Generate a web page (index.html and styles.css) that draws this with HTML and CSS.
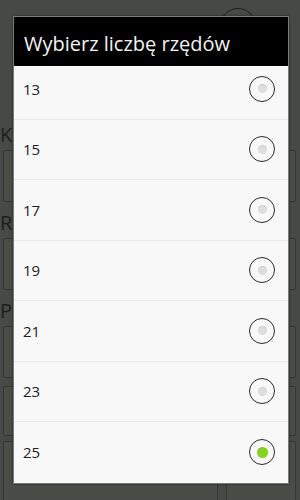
FILE: index.html
```html
<!DOCTYPE html>
<html lang="pl">
<head>
    <meta charset="UTF-8">
    <meta name="viewport" content="width=device-width, initial-scale=1.0">
    <title>Wybierz liczbę rzędów</title>
    <link rel="stylesheet" href="styles.css">
</head>
<body>
    <!-- Ekran pod spodem -->
    <div class="screen">
        <div class="top-icon"></div>
        <div class="label first">Kolumny</div>
        <div class="field">9</div>
        <div class="label">Rzędy</div>
        <div class="field">25</div>
        <div class="label">Pola</div>
        <div class="field">6</div>
        <div class="field short"></div>
        <div class="buttons">
            <div class="btn-back"></div>
            <div class="btn-back small"></div>
        </div>
    </div>
    <div class="dim"></div>

    <!-- Okno dialogowe -->
    <div class="dialog">
        <div class="dialog-title">Wybierz liczbę rzędów</div>
        <div class="list">
            <div class="inner">
                <div class="row"><span>13</span><span class="radio"></span></div>
                <div class="row"><span>15</span><span class="radio"></span></div>
                <div class="row"><span>17</span><span class="radio"></span></div>
                <div class="row"><span>19</span><span class="radio"></span></div>
                <div class="row"><span>21</span><span class="radio"></span></div>
                <div class="row"><span>23</span><span class="radio"></span></div>
                <div class="row"><span>25</span><span class="radio checked"></span></div>
            </div>
        </div>
    </div>
</body>
</html>
```

FILE: styles.css
```css
body {
    margin: 0;
    width: 300px;
    height: 500px;
    overflow: hidden;
    position: relative;
    font-family: 'Open Sans', 'Noto Sans', sans-serif;
    background: #4c4f4a;
}

/* Ekran pod spodem */
.screen {
    padding: 0 4px 0 3px;
}

.top-icon {
    width: 34px;
    height: 34px;
    margin: 8px 0 0 217px;
    border: 1px solid #111;
    border-radius: 50%;
    opacity: 0.8;
}

.label {
    font-size: 20px;
    color: #1c1c1c;
    margin: 10px 0 4px -3px;
    line-height: 22px;
}

.label.first {
    margin-top: 80px;
}

.field {
    height: 50px;
    border: 1px solid #393b37;
    border-radius: 2px;
    background: #50534e;
    color: #222;
    font-size: 16px;
    line-height: 50px;
    padding-left: 14px;
}

.field.short {
    margin-top: 8px;
    height: 48px;
}

.buttons {
    display: flex;
    gap: 8px;
    margin-top: 5px;
}

.btn-back {
    flex: 1;
    height: 58px;
    border: 1px solid #393b37;
    background: #50534e;
}

.btn-back.small {
    flex: 0 0 68px;
}

.dim {
    position: absolute;
    top: 0;
    left: 0;
    right: 0;
    bottom: 0;
    background: rgba(40, 40, 40, 0.15);
}

/* Okno dialogowe */
.dialog {
    position: absolute;
    top: 16px;
    left: 13px;
    width: 274px;
    border: 1px solid #7a7a7a;
    box-shadow: 0 0 2px rgba(0, 0, 0, 0.6);
}

.dialog-title {
    background: #000;
    color: #f2f2f2;
    font-size: 20px;
    height: 49px;
    line-height: 54px;
    padding-left: 10px;
    white-space: nowrap;
}

.list {
    background: #f8f8f8;
    height: 417px;
    overflow: hidden;
}

.inner {
    margin-top: -7px;
}

.row {
    box-sizing: border-box;
    height: 60.5px;
    display: flex;
    align-items: center;
    justify-content: space-between;
    padding: 0 13px 0 9px;
    border-bottom: 1px solid #ebebeb;
    font-size: 15px;
    color: #222;
}

.row:last-child {
    border-bottom: none;
}

.radio {
    box-sizing: border-box;
    width: 26px;
    height: 26px;
    border: 1px solid #2a2a2a;
    border-radius: 50%;
    display: flex;
    align-items: center;
    justify-content: center;
}

.radio::after {
    content: "";
    width: 9px;
    height: 9px;
    border-radius: 50%;
    background: #dedede;
    box-shadow: inset 0 1px 1px rgba(0, 0, 0, 0.08);
}

.radio.checked::after {
    width: 11px;
    height: 11px;
    background: #86d21f;
}
```
